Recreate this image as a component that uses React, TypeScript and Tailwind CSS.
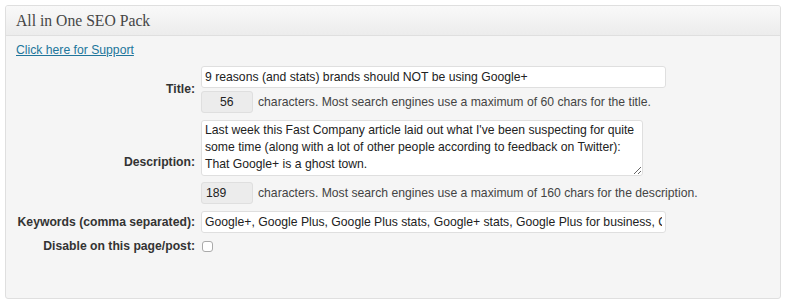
import React from "react";

export default function App() {
  const sans = { fontFamily: '"Liberation Sans", Arial, sans-serif' };
  return (
    <div className="w-[786px] h-[304px] bg-white p-[5px] pr-[5px]" style={sans}>
      <div className="w-[776px] h-[294px] border border-[#dfdfdf] rounded-[3px] bg-[#f5f5f5] overflow-hidden">
        <div className="h-[30px] flex items-center px-[10px] bg-gradient-to-b from-[#f9f9f9] to-[#ececec] border-b border-[#dfdfdf]">
          <span className="text-[15.7px] text-[#464646] leading-none pt-[1px]" style={{ fontFamily: '"Liberation Serif", Georgia, serif' }}>
            All in One SEO Pack
          </span>
        </div>
        <div className="px-[10px] pt-[6px] text-[12.2px] text-[#333]">
          <a href="#" className="text-[#21759b] underline leading-[16px] block w-fit">Click here for Support</a>
          <div className="grid grid-cols-[179px_1fr] gap-x-[6px] items-center mt-[8px]">
            <div className="text-right font-bold text-[#333] whitespace-nowrap">Title:</div>
            <div className="flex flex-col gap-[3px]">
              <input readOnly value="9 reasons (and stats) brands should NOT be using Google+" className="w-[465px] h-[22px] bg-white border border-[#dfdfdf] rounded-[3px] px-[3px] text-[12.2px] text-[#222] outline-none" />
              <div className="flex items-center gap-[5px]">
                <div className="w-[52px] h-[22px] bg-[#ececec] border border-[#dfdfdf] rounded-[3px] flex items-center pl-[18px] text-[#222]">56</div>
                <span className="text-[#444]">characters. Most search engines use a maximum of 60 chars for the title.</span>
              </div>
            </div>

            <div className="text-right font-bold text-[#333] mt-[7px] whitespace-nowrap">Description:</div>
            <div className="flex flex-col gap-[6px] mt-[7px]">
              <textarea readOnly defaultValue="Last week this Fast Company article laid out what I've been suspecting for quite some time (along with a lot of other people according to feedback on Twitter): That Google+ is a ghost town." className="w-[442px] h-[56px] bg-white border border-[#dfdfdf] rounded-[3px] px-[3px] py-[1px] text-[12.2px] leading-[17px] text-[#222] outline-none" />
              <div className="flex items-center gap-[5px]">
                <div className="w-[52px] h-[22px] bg-[#ececec] border border-[#dfdfdf] rounded-[3px] flex items-center pl-[4px] text-[#222]">189</div>
                <span className="text-[#444]">characters. Most search engines use a maximum of 160 chars for the description.</span>
              </div>
            </div>

            <div className="text-right font-bold text-[#333] mt-[7px] whitespace-nowrap">Keywords (comma separated):</div>
            <div className="mt-[7px]">
              <input readOnly value="Google+, Google Plus, Google Plus stats, Google+ stats, Google Plus for business, Google+ for business" className="w-[465px] h-[22px] bg-white border border-[#dfdfdf] rounded-[3px] px-[3px] text-[12.2px] text-[#222] outline-none" />
            </div>

            <div className="text-right font-bold text-[#333] mt-[4px] whitespace-nowrap">Disable on this page/post:</div>
            <div className="mt-[4px] flex items-center h-[16px]">
              <input type="checkbox" className="appearance-none w-[11px] h-[11px] ml-[1px] bg-white border border-[#aaa] rounded-[3px]" />
            </div>
          </div>
        </div>
      </div>
    </div>
  );
}
